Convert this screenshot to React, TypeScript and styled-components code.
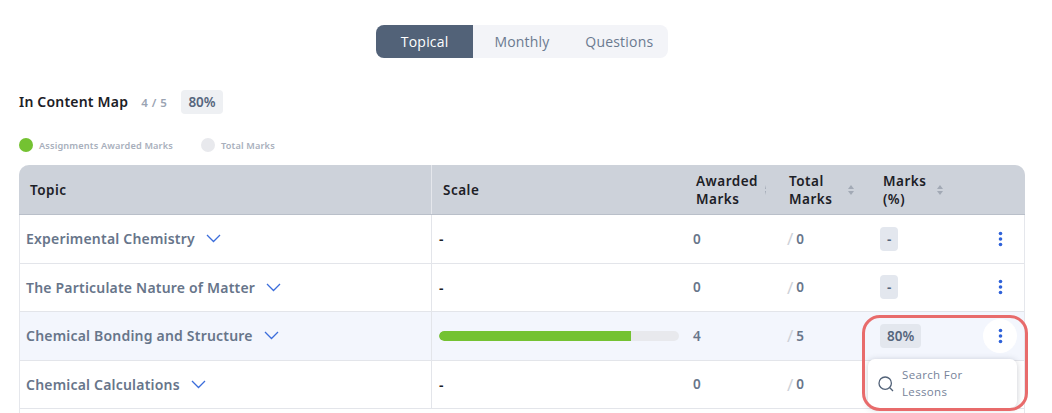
import React from 'react';
import styled, {createGlobalStyle} from 'styled-components';

const GlobalStyle = createGlobalStyle`
  html, body {
    margin: 0;
    padding: 0;
    background: #fff;
    overflow: hidden;
  }

  * {
    box-sizing: border-box;
  }
`;

const Page = styled.div`
  position: relative;
  width: 1052px;
  height: 413px;
  overflow: hidden;
  padding: 25px 27px 0 19px;
  font-family: "Noto Sans", "Open Sans", sans-serif;
`;

const Tabs = styled.div`
  display: flex;
  width: 292px;
  height: 33px;
  margin-left: 357px;
  border-radius: 8px;
  overflow: hidden;
  background: #f3f4f8;
`;

const Tab = styled.div<{ $active?: boolean }>`
  flex: 1;
  display: flex;
  align-items: center;
  justify-content: center;
  font-family: "Open Sans", sans-serif;
  font-size: 14px;
  letter-spacing: .2px;
  color: ${(p) => (p.$active ? '#fff' : '#6b7a90')};
  background: ${(p) => (p.$active ? '#526278' : 'transparent')};
`;

const Summary = styled.div`
  display: flex;
  align-items: center;
  height: 24px;
  margin-top: 32px;
`;

const SummaryTitle = styled.span`
  position: relative;
  top: -1px;
  font-size: 14px;
  font-weight: 600;
  letter-spacing: .2px;
  color: #1c2026;
`;

const SummaryCount = styled.span`
  margin-left: 13px;
  font-size: 11.5px;
  font-weight: 600;
  letter-spacing: .5px;
  color: #9aa3b2;
`;

const Badge = styled.span<{ $tint?: boolean }>`
  display: inline-flex;
  align-items: center;
  justify-content: center;
  height: 24px;
  padding: 0 7px;
  border-radius: 4px;
  font-size: 13.5px;
  font-weight: 600;
  color: #56667d;
  background: ${(p) => (p.$tint ? '#e3e7ee' : '#eef0f3')};
`;

const SummaryBadge = styled(Badge)`
  margin-left: 14px;
`;

const Legend = styled.div`
  display: flex;
  align-items: center;
  height: 14px;
  margin-top: 24px;
`;

const LegendDot = styled.span<{ $color: string }>`
  width: 14px;
  height: 14px;
  border-radius: 50%;
  background: ${(p) => p.$color};
`;

const LegendLabel = styled.span`
  margin-left: 6px;
  margin-right: 28px;
  font-size: 9.2px;
  font-weight: 600;
  letter-spacing: .15px;
  color: #a8afbc;
`;

const Table = styled.div`
  margin-top: 13px;
  border: 1px solid #e5e7ec;
  border-top: 0;
  border-radius: 10px 10px 0 0;
`;

const HeaderRow = styled.div`
  display: grid;
  grid-template-columns: 413px 254px 93px 94px 150px;
  height: 50px;
  margin: 0 -1px;
  background: #cdd2da;
  border-bottom: 1px solid #b9bfc9;
  border-radius: 10px 10px 0 0;
`;

const HeaderCell = styled.div<{ $divider?: boolean; $wide?: boolean }>`
  display: flex;
  align-items: center;
  padding-left: ${(p) => (p.$wide ? 11 : 10)}px;
  font-size: 13.5px;
  line-height: 18px;
  font-weight: 600;
  letter-spacing: .5px;
  color: #1c2026;
  border-right: ${(p) => (p.$divider ? '1px solid #e5e7ec' : '0')};
`;

const HeaderLabel = styled.span<{ $width: number }>`
  width: ${(p) => p.$width}px;
  flex: none;
`;

const SortIcon = styled.svg<{ $squeezed?: boolean }>`
  flex: none;
  width: ${(p) => (p.$squeezed ? 1 : 6)}px;
  height: 10px;
  color: #a2a9b5;
`;

const Row = styled.div<{ $active?: boolean }>`
  display: grid;
  grid-template-columns: 412px 254px 93px 94px 149px;
  height: 48.5px;
  border-bottom: 1px solid #e3e5ea;
  background: ${(p) => (p.$active ? '#f3f6fd' : '#fff')};
`;

const TopicCell = styled.div`
  display: flex;
  align-items: center;
  gap: 11px;
  padding-left: 6px;
  font-size: 14px;
  font-weight: 600;
  letter-spacing: .2px;
  color: #67758a;
  border-right: 1px solid #e3e5ea;
`;

const Cell = styled.div`
  display: flex;
  align-items: center;
  padding-left: 7px;
  font-size: 13.5px;
  font-weight: 600;
  color: #67758a;
`;

const Dash = styled.span`
  font-size: 14px;
  font-weight: 600;
  color: #1c2026;
`;

const Track = styled.div`
  width: 240px;
  height: 10px;
  border-radius: 5px;
  background: #e8e9ed;
  overflow: hidden;
`;

const Fill = styled.div`
  height: 100%;
  background: #74c232;
  border-radius: 5px 0 0 5px;
`;

const Slash = styled.span`
  margin-left: 1px;
  margin-right: 3px;
  font-weight: 400;
  font-size: 17px;
  color: #cdd1d8;
`;

const MarksCell = styled(Cell)`
  position: relative;
  justify-content: space-between;
  padding-right: 5px;
`;

const MoreButton = styled.div<{ $open?: boolean }>`
  display: flex;
  align-items: center;
  justify-content: center;
  width: 34px;
  height: 34px;
  border-radius: 50%;
  background: ${(p) => (p.$open ? '#fff' : 'transparent')};
`;

const Popover = styled.div`
  position: absolute;
  top: 47px;
  left: -5px;
  width: 149px;
  height: 49px;
  display: flex;
  align-items: center;
  gap: 8px;
  padding-left: 10px;
  background: #fff;
  border-radius: 7px;
  box-shadow: 0 1px 6px rgba(60, 70, 90, .28);
  z-index: 2;
`;

const PopoverText = styled.span`
  position: relative;
  top: -1px;
  width: 90px;
  font-family: "Open Sans", sans-serif;
  font-size: 11.5px;
  line-height: 17px;
  font-weight: 400;
  letter-spacing: .35px;
  color: #76839a;
`;

const Highlight = styled.div`
  position: absolute;
  left: 862px;
  top: 315px;
  width: 166px;
  height: 96px;
  border: 3px solid #e86b6b;
  border-radius: 18px;
  z-index: 3;
  pointer-events: none;
`;

const Sort = ({squeezed}: { squeezed?: boolean }) => (
    <SortIcon $squeezed={squeezed} viewBox="0 0 6 10" preserveAspectRatio="none">
        <path d="M3 0 L6 4 L0 4 Z M3 10 L6 6 L0 6 Z" fill="currentColor"/>
    </SortIcon>
);

const Chevron = () => (
    <svg width="15" height="9" viewBox="0 0 15 9" fill="none">
        <path d="M1 1 L7.5 7.5 L14 1" stroke="#3b6ddb" strokeWidth="1.3"/>
    </svg>
);

const Dots = () => (
    <svg width="5" height="16" viewBox="0 0 5 16">
        <circle cx="2.5" cy="2.5" r="1.8" fill="#2f62d9"/>
        <circle cx="2.5" cy="8" r="1.8" fill="#2f62d9"/>
        <circle cx="2.5" cy="13.5" r="1.8" fill="#2f62d9"/>
    </svg>
);

const SearchGlyph = () => (
    <svg width="16" height="16" viewBox="0 0 16 16" fill="none">
        <circle cx="7.2" cy="7.2" r="6.2" stroke="#526278" strokeWidth="1.3"/>
        <path d="M11.8 11.8 L15 15" stroke="#526278" strokeWidth="1.3"/>
    </svg>
);

interface TopicRowProps {
    name: string;
    awarded: number;
    total: number;
    percent?: number;
}

const TopicRow = ({name, awarded, total, percent}: TopicRowProps) => {
    const scored = percent !== undefined;

    return <Row $active={scored}>
        <TopicCell>{name} <Chevron/></TopicCell>
        <Cell>
            {scored
                ? <Track><Fill style={{width: `${percent}%`}}/></Track>
                : <Dash>-</Dash>}
        </Cell>
        <Cell>{awarded}</Cell>
        <Cell><Slash>/</Slash>{total}</Cell>
        <MarksCell>
            <Badge $tint>{scored ? `${percent}%` : '-'}</Badge>
            <MoreButton $open={scored}><Dots/></MoreButton>
            {scored && <Popover>
                <SearchGlyph/>
                <PopoverText>Search For Lessons</PopoverText>
            </Popover>}
        </MarksCell>
    </Row>;
};

const App = () => {
    return <>
        <GlobalStyle/>
        <Page>
            <Tabs>
                <Tab $active>Topical</Tab>
                <Tab>Monthly</Tab>
                <Tab>Questions</Tab>
            </Tabs>

            <Summary>
                <SummaryTitle>In Content Map</SummaryTitle>
                <SummaryCount>4 / 5</SummaryCount>
                <SummaryBadge>80%</SummaryBadge>
            </Summary>

            <Legend>
                <LegendDot $color="#74c232"/>
                <LegendLabel>Assignments Awarded Marks</LegendLabel>
                <LegendDot $color="#e8e9ed"/>
                <LegendLabel>Total Marks</LegendLabel>
            </Legend>

            <Table>
                <HeaderRow>
                    <HeaderCell $divider $wide>Topic</HeaderCell>
                    <HeaderCell $wide>Scale</HeaderCell>
                    <HeaderCell><HeaderLabel $width={69}>Awarded<br/>Marks</HeaderLabel><Sort squeezed/></HeaderCell>
                    <HeaderCell><HeaderLabel $width={59}>Total<br/>Marks</HeaderLabel><Sort/></HeaderCell>
                    <HeaderCell><HeaderLabel $width={54}>Marks<br/>(%)</HeaderLabel><Sort/></HeaderCell>
                </HeaderRow>
                <TopicRow name="Experimental Chemistry" awarded={0} total={0}/>
                <TopicRow name="The Particulate Nature of Matter" awarded={0} total={0}/>
                <TopicRow name="Chemical Bonding and Structure" awarded={4} total={5} percent={80}/>
                <TopicRow name="Chemical Calculations" awarded={0} total={0}/>
                <Row/>
            </Table>

            <Highlight/>
        </Page>
    </>;
};

export default App;
